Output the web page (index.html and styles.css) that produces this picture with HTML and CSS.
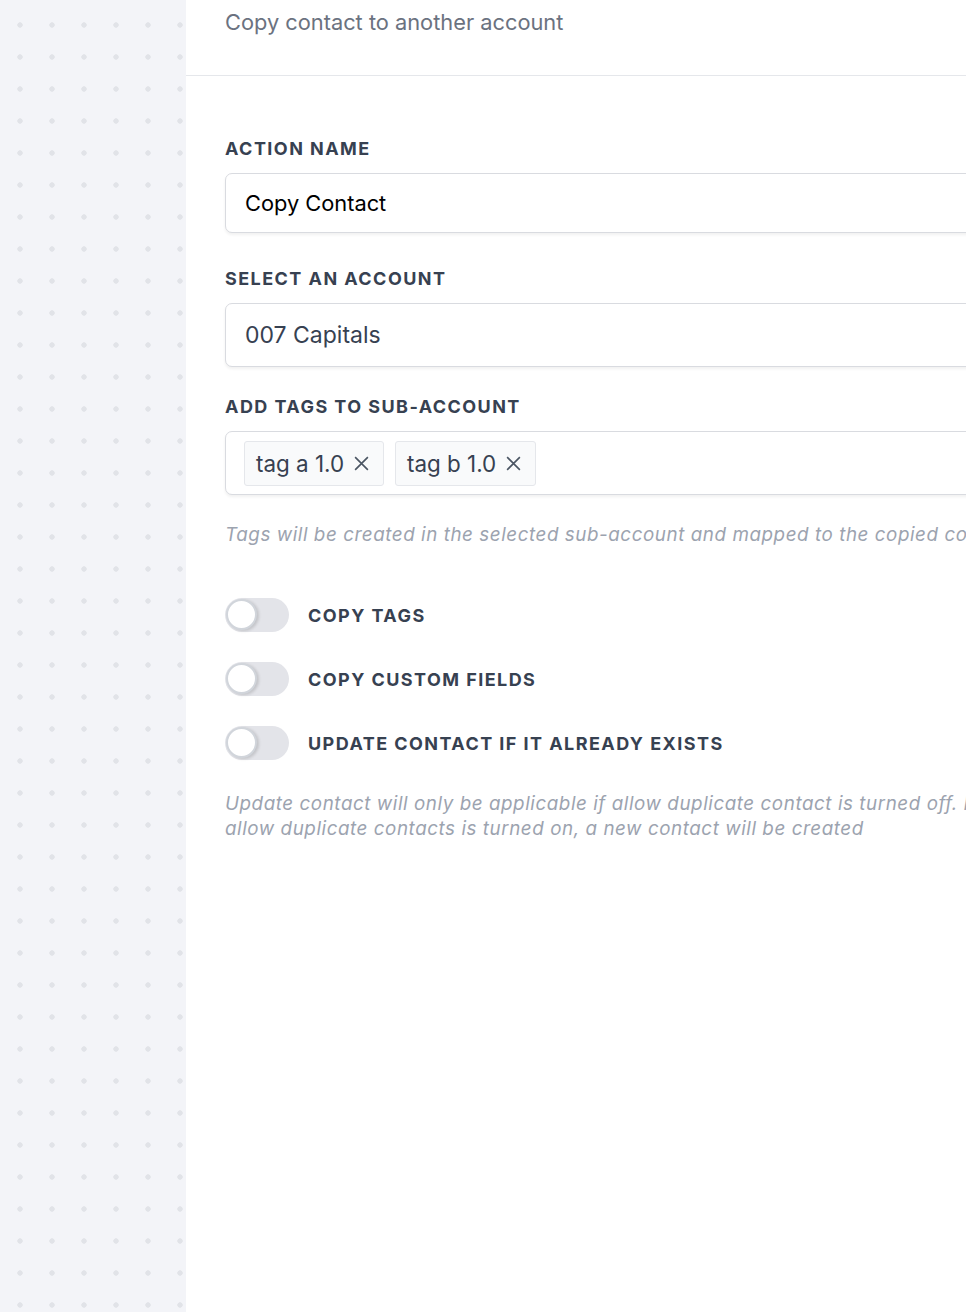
FILE: index.html
```html
<!DOCTYPE html>
<html lang="en">
  <head>
    <meta charset="UTF-8" />
    <meta name="viewport" content="width=device-width, initial-scale=1.0" />
    <title>Copy Contact</title>
    <link rel="stylesheet" href="styles.css">
  </head>
  <body>
    <div class="workflow">
      <aside class="workflow-canvas"></aside>
      <section class="action-panel">
        <header class="action-panel-header">
          <p>Copy contact to another account</p>
        </header>
        <form class="action-form">
          <div class="field field-first">
            <label class="field-label" for="action-name">Action Name</label>
            <input class="field-input" id="action-name" type="text" value="Copy Contact" />
          </div>
          <div class="field">
            <label class="field-label">Select an Account</label>
            <div class="field-input field-select">007 Capitals</div>
          </div>
          <div class="field">
            <label class="field-label">Add tags to sub-account</label>
            <div class="field-input field-tags">
              <span class="tag">tag a 1.0
                <svg viewBox="0 0 16 16" width="17" height="17"><path d="M2 2 14 14M14 2 2 14" /></svg>
              </span>
              <span class="tag">tag b 1.0
                <svg viewBox="0 0 16 16" width="17" height="17"><path d="M2 2 14 14M14 2 2 14" /></svg>
              </span>
            </div>
            <p class="field-help">Tags will be created in the selected sub-account and mapped to the copied contact</p>
          </div>
          <ul class="switch-list">
            <li>
              <label class="switch"><input type="checkbox" role="switch" /><span class="switch-slider"></span></label>
              <span class="switch-label">Copy tags</span>
            </li>
            <li>
              <label class="switch"><input type="checkbox" role="switch" /><span class="switch-slider"></span></label>
              <span class="switch-label">Copy custom fields</span>
            </li>
            <li>
              <label class="switch"><input type="checkbox" role="switch" /><span class="switch-slider"></span></label>
              <span class="switch-label">Update contact if it already exists</span>
            </li>
          </ul>
          <p class="field-help field-help-wide">Update contact will only be applicable if allow duplicate contact is turned off. If allow duplicate contacts is turned on, a new contact will be created</p>
        </form>
      </section>
    </div>
  </body>
</html>
```

FILE: styles.css
```css
:root {
  --canvas-bg: #f3f4f8;
  --canvas-dot: #e1e3e8;
  --border: #d9dbe0;
  --text: #374151;
  --muted: #6b7280;
  --help: #9ca3af;
}

body {
  margin: 0;
  overflow: hidden;
  font-family: Inter, "Noto Sans", sans-serif;
  color: var(--text);
}

.workflow {
  display: flex;
  min-height: 1312px;
}

/* dotted builder canvas */
.workflow-canvas {
  flex: 0 0 186px;
  background-color: var(--canvas-bg);
  background-image: radial-gradient(circle, var(--canvas-dot) 2.4px, transparent 3px);
  background-size: 32px 32px;
  background-position: 4px 9px;
}

.action-panel {
  flex: 0 0 auto;
  width: 1100px;
  background: #fff;
}

.action-panel-header {
  padding: 8px 39px 0;
  height: 67px;
  border-bottom: 1px solid #e5e7eb;

  p {
    margin: 0;
    font-size: 21.8px;
    line-height: 28px;
    color: var(--muted);
  }
}

.action-form {
  padding: 61px 39px 0;
}

.field {
  display: flex;
  flex-direction: column;
  margin-bottom: 28px;
}

.field-first {
  margin-bottom: 34px;
}

.field-label {
  font-size: 18px;
  font-weight: 700;
  letter-spacing: 0.08em;
  text-transform: uppercase;
  line-height: 24px;
  margin-bottom: 12px;
}

.field-input {
  box-sizing: border-box;
  height: 60px;
  padding: 0 19px;
  border: 1px solid var(--border);
  border-radius: 7px;
  box-shadow: 0 2px 3px rgba(0, 0, 0, 0.06);
  background: #fff;
  font: inherit;
  font-size: 21.8px;
  color: #000;
  outline: none;
}

.field-select {
  display: flex;
  align-items: center;
  height: 64px;
  font-size: 23px;
  color: var(--text);
}

.field-tags {
  display: flex;
  align-items: center;
  gap: 11px;
  height: 64px;
  padding: 0 18px;
}

.tag {
  display: inline-flex;
  align-items: center;
  gap: 9px;
  height: 45px;
  box-sizing: border-box;
  padding: 0 13px 0 11px;
  background: #f9fafb;
  border: 1px solid #e5e7eb;
  border-radius: 3px;
  font-size: 22.4px;
  color: var(--text);

  svg {
    stroke: #4b5563;
    stroke-width: 1.5;
    fill: none;
  }
}

.field-help {
  margin: 27px 0 0;
  font-size: 18.8px;
  font-style: italic;
  line-height: 25px;
  letter-spacing: 0.03em;
  color: var(--help);
  white-space: nowrap;
}

.field-help-wide {
  width: 775px;
  white-space: normal;
  margin-top: 31px;
}

.switch-list {
  list-style: none;
  margin: 0;
  padding: 23px 0 0;
  display: flex;
  flex-direction: column;
  gap: 30px;

  li {
    display: flex;
    align-items: center;
    gap: 19px;
  }
}

.switch-label {
  font-size: 18px;
  font-weight: 700;
  letter-spacing: 0.08em;
  text-transform: uppercase;
}

/* toggle */
.switch {
  position: relative;
  display: inline-block;
  width: 64px;
  height: 34px;

  input {
    opacity: 0;
    width: 0;
    height: 0;
  }

  .switch-slider {
    position: absolute;
    inset: 0;
    background: #e3e4e9;
    border-radius: 17px;
    cursor: pointer;

    &:before {
      position: absolute;
      content: "";
      width: 31px;
      height: 31px;
      left: 1px;
      top: 1px;
      box-sizing: border-box;
      background: #fff;
      border: 2px solid #d1d5db;
      border-radius: 50%;
      box-shadow: 2px 1px 3px rgba(0, 0, 0, 0.14);
    }
  }
}
```
